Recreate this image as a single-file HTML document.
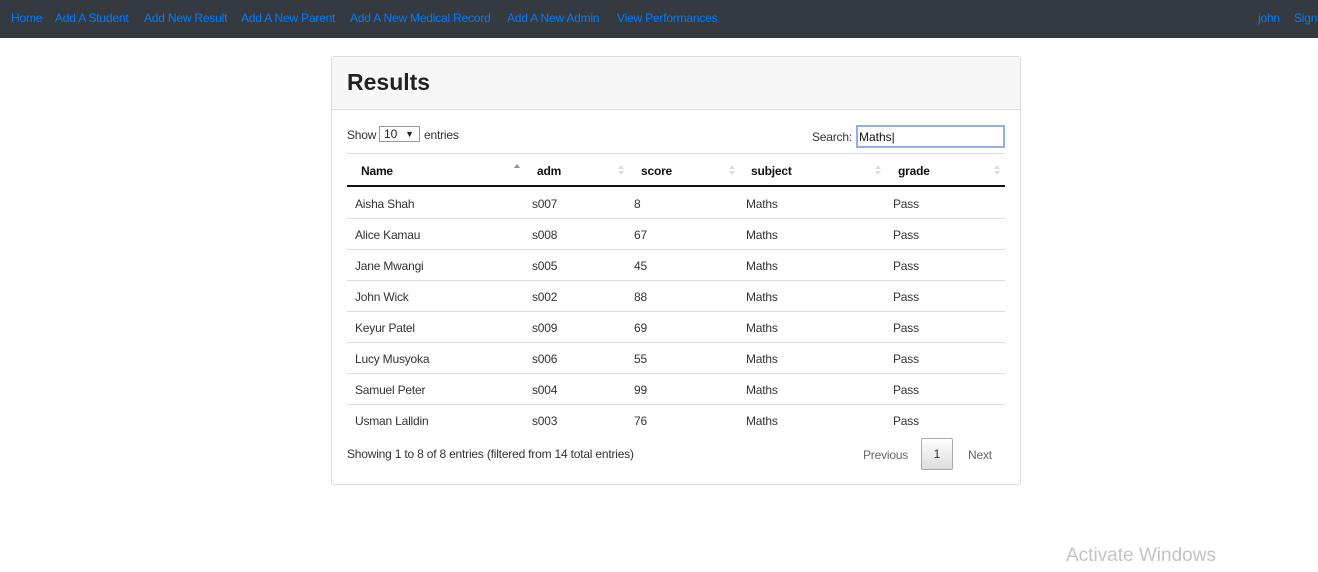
<!DOCTYPE html>
<html><head><meta charset="utf-8"><style>
*{box-sizing:border-box;margin:0;padding:0}
body{width:1318px;height:572px;background:#fff;font-family:"Liberation Sans",sans-serif;position:relative;overflow:hidden;color:#212529}
.nav{position:absolute;left:0;top:0;width:1318px;height:38px;background:#343a40}
.nav a{position:absolute;top:11px;color:#007bff;font-size:12px;text-decoration:none;white-space:nowrap;letter-spacing:-0.2px}
.card{position:absolute;left:331px;top:56px;width:690px;height:429px;border:1px solid #dcdcdc;border-radius:3px}
.ch{position:absolute;left:0;top:0;width:688px;height:53px;background:#f7f7f7;border-bottom:1px solid #dcdcdc}
.ch h1{position:absolute;left:15px;top:12px;font-size:23px;font-weight:bold;color:#222}
.t{position:absolute;font-size:12px;color:#333;white-space:nowrap;letter-spacing:-0.2px}
.b{font-weight:bold;color:#111}
.line{position:absolute;left:347px;width:658px;height:1px;background:#ddd}
.s{position:absolute;width:6px;height:10px}
.s:before{content:"";position:absolute;left:0;top:0;border-left:3px solid transparent;border-right:3px solid transparent;border-bottom:4px solid #ddd}
.s:after{content:"";position:absolute;left:0;top:6px;border-left:3px solid transparent;border-right:3px solid transparent;border-top:4px solid #ddd}
.s.up:before{border-bottom-color:#7a8fc8}
.s.up:after{display:none}
</style></head><body>
<div class="nav">
<a style="left:11px">Home</a>
<a style="left:55px">Add A Student</a>
<a style="left:144px">Add New Result</a>
<a style="left:241px">Add A New Parent</a>
<a style="left:350px">Add A New Medical Record</a>
<a style="left:507px">Add A New Admin</a>
<a style="left:617px">View Performances</a>
<a style="left:1258px">john</a>
<a style="left:1294px">Sign</a>
</div>
<div class="card"><div class="ch"><h1>Results</h1></div></div>
<div class="t" style="left:347px;top:128px">Show</div>
<div style="position:absolute;left:379px;top:126px;width:41px;height:16px;border:1px solid #999;font-size:12px;padding-left:4px;line-height:14px">10<span style="position:absolute;right:5px;font-size:9px">▼</span></div>
<div class="t" style="left:424px;top:128px">entries</div>
<div class="t" style="left:812px;top:130px">Search:</div>
<div style="position:absolute;left:856px;top:125px;width:149px;height:23px;border:2px solid #8fb1e8;font-size:12px;padding:3px 1px;color:#111">Maths|</div>
<div class="line" style="top:153px"></div>
<div class="t b" style="left:361px;top:164px">Name</div>
<div class="t b" style="left:537px;top:164px">adm</div>
<div class="t b" style="left:641px;top:164px">score</div>
<div class="t b" style="left:751px;top:164px">subject</div>
<div class="t b" style="left:898px;top:164px">grade</div>
<div class="s up" style="left:514px;top:164px"></div>
<div class="s" style="left:618px;top:165px"></div>
<div class="s" style="left:729px;top:165px"></div>
<div class="s" style="left:875px;top:165px"></div>
<div class="s" style="left:994px;top:165px"></div>
<div style="position:absolute;left:347px;top:185px;width:658px;height:2px;background:#111"></div>
<div class="t" style="left:355px;top:197px">Aisha Shah</div><div class="t" style="left:532px;top:197px">s007</div><div class="t" style="left:634px;top:197px">8</div><div class="t" style="left:746px;top:197px">Maths</div><div class="t" style="left:893px;top:197px">Pass</div>
<div class="line" style="top:218px"></div>
<div class="t" style="left:355px;top:228px">Alice Kamau</div><div class="t" style="left:532px;top:228px">s008</div><div class="t" style="left:634px;top:228px">67</div><div class="t" style="left:746px;top:228px">Maths</div><div class="t" style="left:893px;top:228px">Pass</div>
<div class="line" style="top:249px"></div>
<div class="t" style="left:355px;top:259px">Jane Mwangi</div><div class="t" style="left:532px;top:259px">s005</div><div class="t" style="left:634px;top:259px">45</div><div class="t" style="left:746px;top:259px">Maths</div><div class="t" style="left:893px;top:259px">Pass</div>
<div class="line" style="top:280px"></div>
<div class="t" style="left:355px;top:290px">John Wick</div><div class="t" style="left:532px;top:290px">s002</div><div class="t" style="left:634px;top:290px">88</div><div class="t" style="left:746px;top:290px">Maths</div><div class="t" style="left:893px;top:290px">Pass</div>
<div class="line" style="top:311px"></div>
<div class="t" style="left:355px;top:321px">Keyur Patel</div><div class="t" style="left:532px;top:321px">s009</div><div class="t" style="left:634px;top:321px">69</div><div class="t" style="left:746px;top:321px">Maths</div><div class="t" style="left:893px;top:321px">Pass</div>
<div class="line" style="top:342px"></div>
<div class="t" style="left:355px;top:352px">Lucy Musyoka</div><div class="t" style="left:532px;top:352px">s006</div><div class="t" style="left:634px;top:352px">55</div><div class="t" style="left:746px;top:352px">Maths</div><div class="t" style="left:893px;top:352px">Pass</div>
<div class="line" style="top:373px"></div>
<div class="t" style="left:355px;top:383px">Samuel Peter</div><div class="t" style="left:532px;top:383px">s004</div><div class="t" style="left:634px;top:383px">99</div><div class="t" style="left:746px;top:383px">Maths</div><div class="t" style="left:893px;top:383px">Pass</div>
<div class="line" style="top:404px"></div>
<div class="t" style="left:355px;top:414px">Usman Lalldin</div><div class="t" style="left:532px;top:414px">s003</div><div class="t" style="left:634px;top:414px">76</div><div class="t" style="left:746px;top:414px">Maths</div><div class="t" style="left:893px;top:414px">Pass</div>
<div class="t" style="left:347px;top:447px">Showing 1 to 8 of 8 entries (filtered from 14 total entries)</div>
<div class="t" style="left:863px;top:448px;color:#666">Previous</div>
<div style="position:absolute;left:921px;top:438px;width:32px;height:32px;border:1px solid #aaa;border-radius:2px;background:linear-gradient(#fff,#ddd);font-size:12px;text-align:center;line-height:30px;color:#333">1</div>
<div class="t" style="left:968px;top:448px;color:#666">Next</div>
<div style="position:absolute;left:1066px;top:545px;font-size:19px;color:#c4c4c4">Activate Windows</div>
</body></html>
